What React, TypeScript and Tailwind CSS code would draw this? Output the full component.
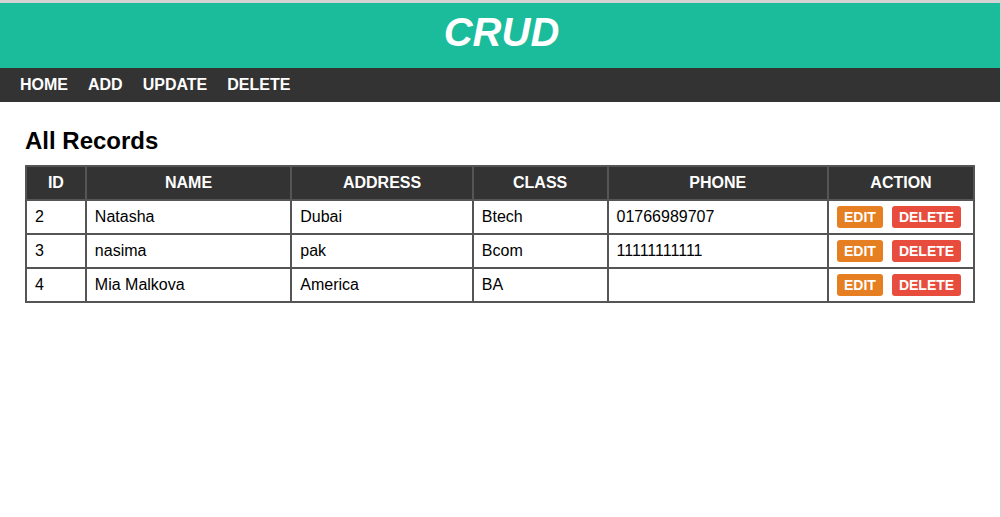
import React from "react";

const rows = [
  { id: "2", name: "Natasha", address: "Dubai", cls: "Btech", phone: "01766989707" },
  { id: "3", name: "nasima", address: "pak", cls: "Bcom", phone: "11111111111" },
  { id: "4", name: "Mia Malkova", address: "America", cls: "BA", phone: "" },
];

const th = "border-2 border-[#555555] bg-[#333333] text-white font-bold text-center px-2 h-[34px]";
const td = "border-2 border-[#555555] px-2 h-[34px] text-left align-middle";

export default function App() {
  return (
    <div
      className="min-h-[517px] w-[1001px] border-t-[3px] border-r border-[#d3d3d3] bg-white text-black"
      style={{ fontFamily: '"Liberation Sans", Arial, sans-serif' }}
    >
      <header className="h-[65px] bg-[#1abc9c] pl-[3px] pt-[6px] text-center">
        <h1 className="text-[40px] font-bold italic leading-[46px] text-white">CRUD</h1>
      </header>
      <nav className="flex h-[34px] items-center gap-5 bg-[#333333] pl-5 text-[16px] font-bold text-white">
        <a>HOME</a>
        <a>ADD</a>
        <a>UPDATE</a>
        <a>DELETE</a>
      </nav>
      <main className="px-[25px] pt-[25px]">
        <h2 className="mb-[10px] text-[24px] font-bold leading-[28px]">All Records</h2>
        <table className="w-full border-collapse text-[16px]">
          <colgroup>
            <col className="w-[60px]" />
            <col className="w-[206px]" />
            <col className="w-[182px]" />
            <col className="w-[135px]" />
            <col className="w-[221px]" />
            <col className="w-[146px]" />
          </colgroup>
          <thead>
            <tr>
              <th className={th}>ID</th>
              <th className={th}>NAME</th>
              <th className={th}>ADDRESS</th>
              <th className={th}>CLASS</th>
              <th className={th}>PHONE</th>
              <th className={th}>ACTION</th>
            </tr>
          </thead>
          <tbody>
            {rows.map((r) => (
              <tr key={r.id}>
                <td className={td}>{r.id}</td>
                <td className={td}>{r.name}</td>
                <td className={td}>{r.address}</td>
                <td className={td}>{r.cls}</td>
                <td className={td}>{r.phone}</td>
                <td className={td}>
                  <div className="flex gap-[9px]">
                    <span className="rounded-[3px] bg-[#e67e22] px-[7px] py-[3px] text-[14px] font-bold leading-[16px] text-white">
                      EDIT
                    </span>
                    <span className="rounded-[3px] bg-[#e74c3c] px-[7px] py-[3px] text-[14px] font-bold leading-[16px] text-white">
                      DELETE
                    </span>
                  </div>
                </td>
              </tr>
            ))}
          </tbody>
        </table>
      </main>
    </div>
  );
}
